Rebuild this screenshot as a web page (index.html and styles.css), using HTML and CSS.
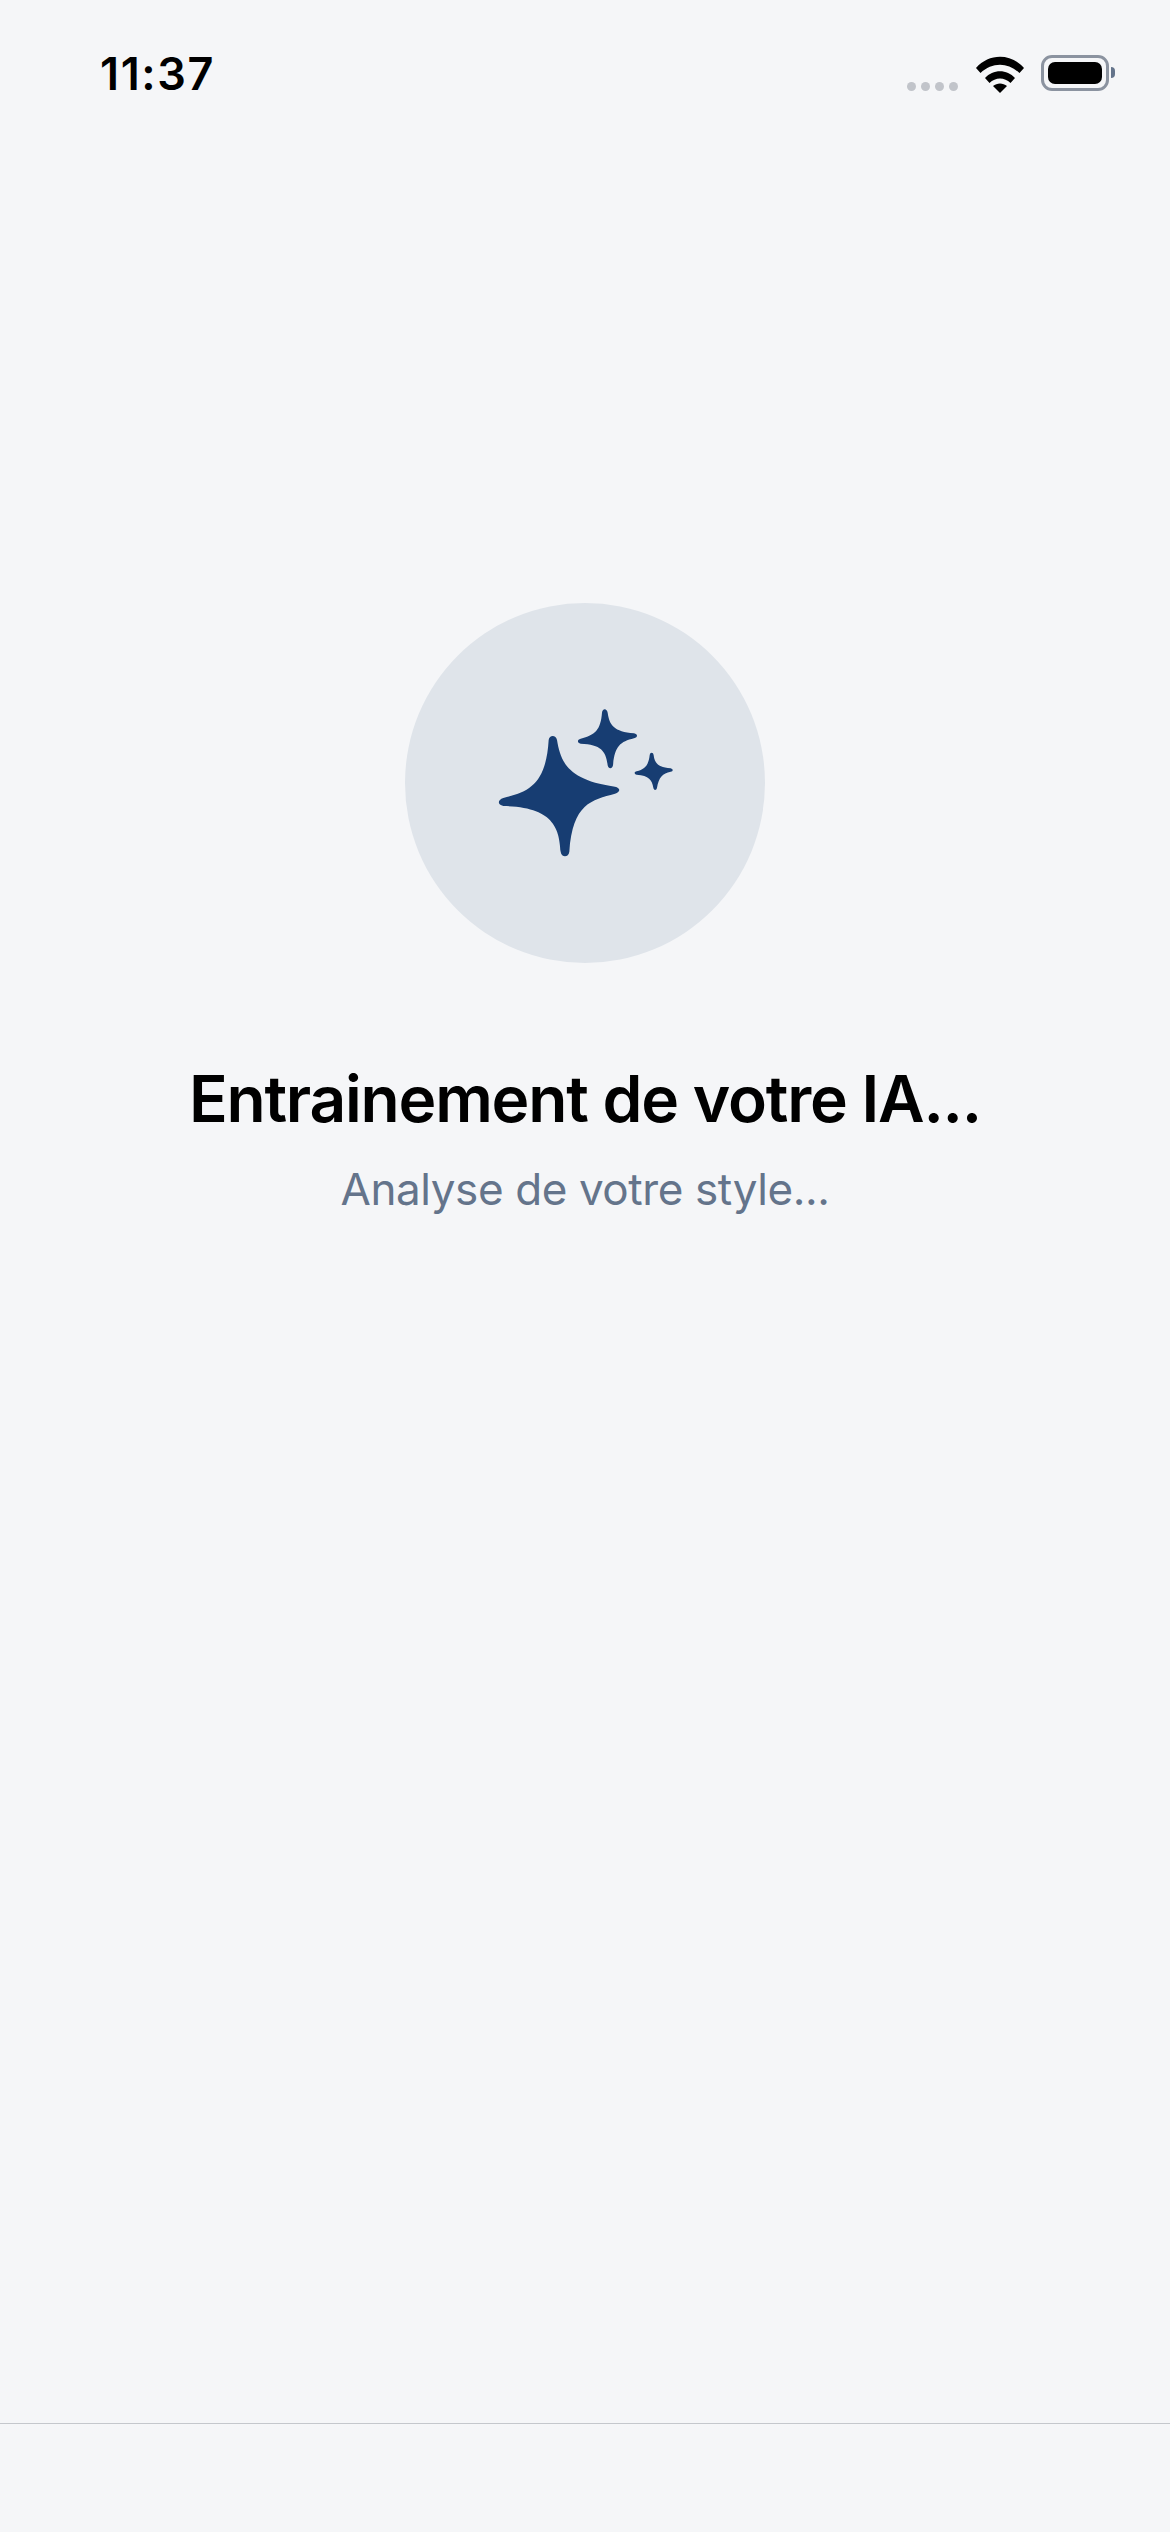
FILE: index.html
```html
<!DOCTYPE html>
<html lang="fr">
<head>
  <meta charset="UTF-8" />
  <meta name="viewport" content="width=device-width, initial-scale=1.0"/>
  <title>Entrainement</title>
  <link rel="stylesheet" href="styles.css">
</head>
<body>

  <header class="status-bar">
    <span class="time">11:37</span>
    <div class="status-icons">
      <div class="signal-dots">
        <span class="dot"></span>
        <span class="dot"></span>
        <span class="dot"></span>
        <span class="dot"></span>
      </div>
      <svg class="wifi" width="50" height="38" viewBox="0 0 50 38">
        <path d="M1 13 C14 -2 36 -2 49 13 L44.5 18 C33 7 17 7 5.500 18 Z" />
        <path d="M10 23 C18 14 32 14 40 23 L35.500 28 C29.500 22 20.500 22 14.500 28 Z" />
        <path d="M18 31 C22 27.500 28 27.500 32 31 L25 38 Z" />
      </svg>
      <div class="battery">
        <div class="battery-fill"></div>
      </div>
      <span class="battery-cap"></span>
    </div>
  </header>

  <main>
    <div class="icon-circle">
      <svg class="sparkles" width="210" height="186" viewBox="0 0 630 558">
        <path d="M206 150 C208 134 228 134 231 150 C242 215 262 270 405 290 C422 294 422 306 405 311 C335 330 278 340 268 485 C266 503 244 503 242 485 C238 420 225 350 70 348 C52 344 52 330 70 324 C150 305 198 280 206 150 Z" />
        <path d="M366 68 C367 54 381 54 383 68 C388 105 402 125 462 130 C474 133 474 142 462 145 C420 155 404 170 399 226 C397 238 385 238 383 226 C378 185 365 163 302 161 C291 158 291 149 302 146 C345 135 362 120 366 68 Z" />
        <path d="M509 196 C510 186 520 186 521 196 C524 220 535 232 572 235 C580 238 580 243 572 245 C548 250 536 262 531 293 C529 302 522 302 520 293 C516 270 507 256 470 254 C462 251 462 246 470 244 C495 238 506 225 509 196 Z" />
      </svg>
    </div>
    <h1 class="title">Entrainement de votre IA...</h1>
    <p class="subtitle">Analyse de votre style...</p>
  </main>

  <footer class="bottom-bar"></footer>

</body>
</html>
```

FILE: styles.css
```css
* { margin: 0; padding: 0; box-sizing: border-box; }

body {
  font-family: 'Inter', 'Liberation Sans', sans-serif;
  background: #f5f6f8;
  color: #000;
  display: flex;
  flex-direction: column;
  min-height: 100vh;
}

.status-bar {
  display: flex;
  justify-content: space-between;
  align-items: flex-start;
  height: 120px;
  padding: 47px 55px 0 100px;
}

.time {
  font-size: 45px;
  font-weight: 600;
  line-height: 54px;
  letter-spacing: 1.6px;
}

.status-icons {
  display: flex;
  align-items: flex-start;
  padding-top: 8px;
}

.signal-dots {
  display: flex;
  gap: 5px;
  margin-top: 27px;
  margin-right: 17px;
}

.dot {
  width: 9px;
  height: 9px;
  border-radius: 50%;
  background: #c1c4ca;
}

.wifi {
  fill: #000;
  margin-right: 16px;
}

.battery {
  width: 68px;
  height: 36px;
  padding: 4px;
  border: 3px solid #8b93a0;
  border-radius: 11px;
}

.battery-fill {
  width: 100%;
  height: 100%;
  background: #000;
  border-radius: 7px;
}

.battery-cap {
  width: 4px;
  height: 11px;
  margin-top: 12px;
  margin-left: 2px;
  background: #64748b;
  border-radius: 0 6px 6px 0;
}

main {
  flex: 1;
  display: flex;
  flex-direction: column;
  align-items: center;
  padding-top: 483px;
  text-align: center;
}

.icon-circle {
  width: 360px;
  height: 360px;
  display: flex;
  align-items: center;
  justify-content: center;
  background: #dfe4ea;
  border-radius: 50%;
}

.sparkles {
  fill: #173d72;
}

.title {
  margin-top: 97px;
  font-size: 64px;
  font-weight: 600;
  line-height: 78px;
  letter-spacing: -1.2px;
}

.subtitle {
  margin-top: 24px;
  font-size: 44px;
  font-weight: 400;
  line-height: 54px;
  letter-spacing: -0.4px;
  color: #64748b;
}

.bottom-bar {
  height: 109px;
  border-top: 1px solid #c4c7cc;
}
```
